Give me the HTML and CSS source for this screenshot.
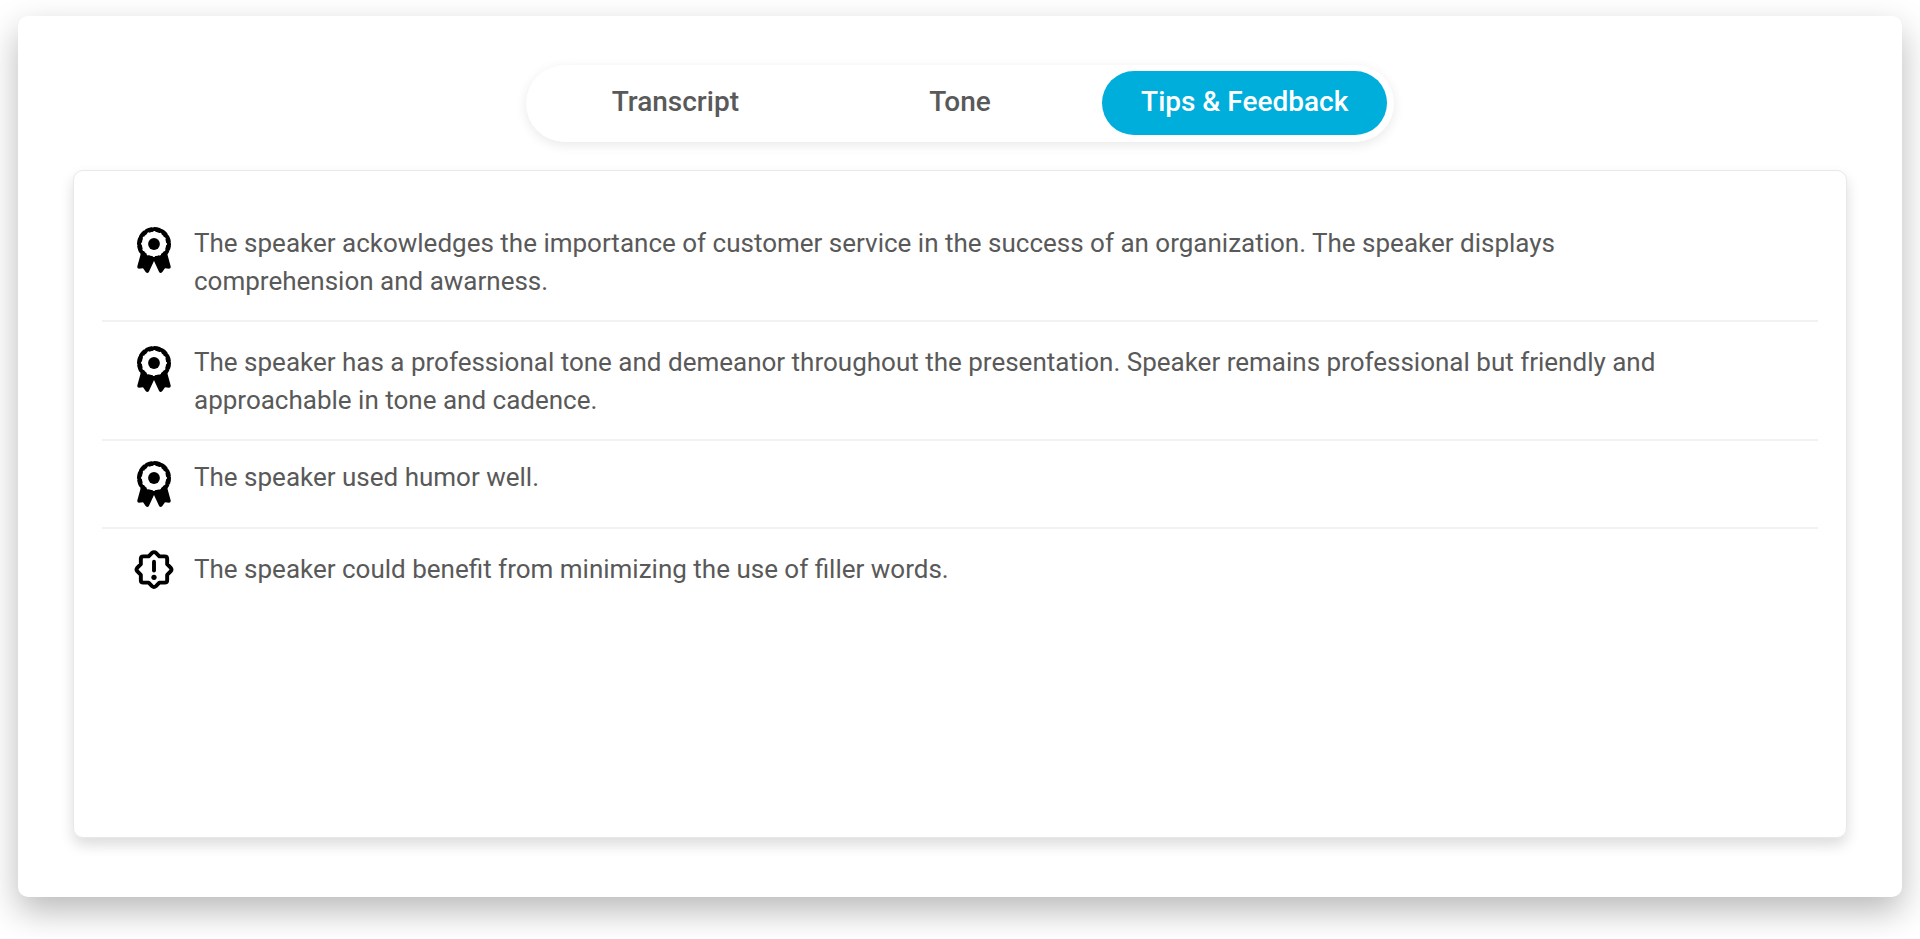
FILE: index.html
```html
<!DOCTYPE html>
<html lang="en">
<head>
    <meta charset="UTF-8">
    <meta name="viewport" content="width=device-width, initial-scale=1.0">
    <title>Tips &amp; Feedback</title>
    <link rel="stylesheet" href="styles.css">
</head>
<body>
    <!-- Shared icons -->
    <svg class="icon-defs" aria-hidden="true">
        <symbol id="icon-award" viewBox="0 0 34 46">
            <path d="M4 26L0.300 39.500Q0 41.700 2 41.700L6 41.200L8.700 45Q10.500 46.800 11.900 45L17 34L22.100 45Q23.500 46.800 25.300 45L28 41.200L32 41.700Q34 41.700 33.700 39.500L30 26Z"/>
            <circle cx="17" cy="17" r="15.600"/>
            <circle cx="17" cy="17" r="14.400" fill="none" stroke="#000" stroke-width="5.200" stroke-dasharray="4.540 3" stroke-linecap="round"/>
            <circle cx="17" cy="17" r="12.200" fill="#fff"/>
            <circle cx="17" cy="17" r="11.800" fill="none" stroke="#fff" stroke-width="2.400" stroke-dasharray="0.100 6.079" stroke-linecap="round"/>
            <circle cx="17" cy="17" r="5.900"/>
        </symbol>
        <symbol id="icon-notice" viewBox="0 0 40 40">
            <path d="M20 2.200Q21.200 2.200 22 3L25.500 6.500H31Q33.500 6.500 33.500 9V14.500L37 18Q38.800 20 37 22L33.500 25.500V31Q33.500 33.500 31 33.500H25.500L22 37Q20 38.800 18 37L14.500 33.500H9Q6.500 33.500 6.500 31V25.500L3 22Q1.200 20 3 18L6.500 14.500V9Q6.500 6.500 9 6.500H14.500L18 3Q18.800 2.200 20 2.200Z" fill="none" stroke="#000" stroke-width="4" stroke-linejoin="round"/>
            <path d="M20 12V21" fill="none" stroke="#000" stroke-width="4" stroke-linecap="round"/>
            <circle cx="20" cy="28" r="2.700"/>
        </symbol>
    </svg>

    <main class="card">
        <nav class="tabs">
            <button class="tab" type="button">Transcript</button>
            <button class="tab" type="button">Tone</button>
            <button class="tab active" type="button">Tips &amp; Feedback</button>
        </nav>

        <section class="panel">
            <ul class="tips">
                <li class="tip">
                    <svg class="icon" aria-hidden="true"><use href="#icon-award"/></svg>
                    <p>The speaker ackowledges the importance of customer service in the success of an organization. The speaker displays comprehension and awarness.</p>
                </li>
                <li class="tip">
                    <svg class="icon" aria-hidden="true"><use href="#icon-award"/></svg>
                    <p>The speaker has a professional tone and demeanor throughout the presentation. Speaker remains professional but friendly and approachable in tone and cadence.</p>
                </li>
                <li class="tip short">
                    <svg class="icon" aria-hidden="true"><use href="#icon-award"/></svg>
                    <p>The speaker used humor well.</p>
                </li>
                <li class="tip">
                    <svg class="icon notice" aria-hidden="true"><use href="#icon-notice"/></svg>
                    <p>The speaker could benefit from minimizing the use of filler words.</p>
                </li>
            </ul>
        </section>
    </main>
</body>
</html>
```
FILE: styles.css
```css
* {
    box-sizing: border-box;
}

body {
    margin: 0;
    padding: 16px 18px 40px;
    background-color: #fff;
    color: #595959;
    font-family: Roboto, sans-serif;
}

.icon-defs {
    position: absolute;
    width: 0;
    height: 0;
}

.card {
    padding: 49px 55px 59px;
    background-color: #fff;
    border-radius: 10px;
    box-shadow: 0 14px 34px rgba(0, 0, 0, 0.28);
}

/* Tab switcher */
.tabs {
    display: grid;
    grid-template-columns: repeat(3, 1fr);
    max-width: 868px;
    margin: 0 auto 28px;
    padding: 6px 7px 7px;
    border-radius: 40px;
    box-shadow: 0 3px 12px rgba(0, 0, 0, 0.09);
}

.tab {
    height: 64px;
    padding: 0 0 4px;
    border: none;
    border-radius: 32px;
    background: none;
    color: inherit;
    font-family: inherit;
    font-size: 28px;
    font-weight: 500;
    cursor: pointer;
}

.tab.active {
    background-color: #00aedb;
    color: #fff;
}

/* Feedback list */
.panel {
    min-height: 668px;
    padding: 32px 28px;
    border: 1px solid #e8e8e8;
    border-radius: 10px;
    box-shadow: 0 7px 14px rgba(0, 0, 0, 0.14);
}

.tips {
    list-style: none;
    margin: 0;
    padding: 0;
}

.tip {
    display: flex;
    align-items: flex-start;
    gap: 20px;
    padding: 21px 130px 20px 32px;
    border-bottom: 2px solid #f2f2f2;
}

.tip:last-child {
    border-bottom: none;
}

.tip.short {
    padding-top: 17px;
}

.tip p {
    margin: 0;
    font-size: 26px;
    line-height: 38px;
}

.icon {
    flex: none;
    width: 40px;
    height: 46px;
    margin-top: 3px;
}

.icon.notice {
    height: 39px;
    margin-top: 0;
}
```
